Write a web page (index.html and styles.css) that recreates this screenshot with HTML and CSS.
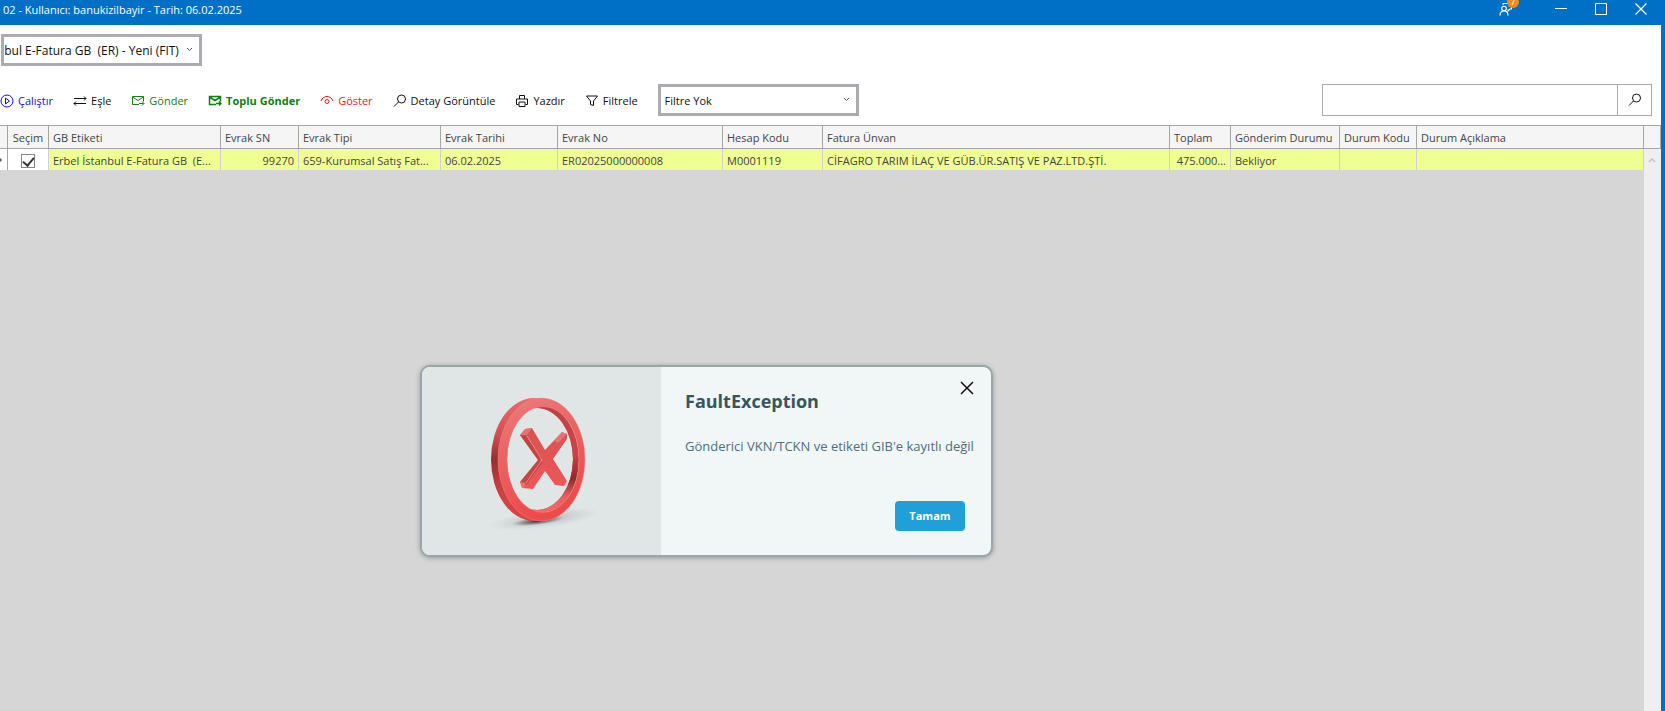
FILE: index.html
```html
<!DOCTYPE html>
<html lang="tr">
<head>
<meta charset="utf-8">
<title>E-Fatura Gönderim</title>
<link rel="stylesheet" href="styles.css">
</head>
<body>
<div class="window">
  <header class="titlebar">
    <span class="titlebar-text">02 - Kullanıcı: banukizilbayir - Tarih: 06.02.2025</span>
    <div class="titlebar-actions">
      <button class="caption-button feedback" aria-label="Geri bildirim">
        <svg width="14" height="14" viewBox="0 0 14 14" fill="none" stroke="#fff" stroke-width="1.1"><path d="M4 3V1.500h8.500V7H11L9 9V7.500"/><circle cx="5" cy="6.500" r="2.300"/><path d="M1 13.500c0-3 1.500-4.500 4-4.500s4 1.500 4 4.500"/></svg>
        <span class="badge">7</span>
      </button>
      <button class="caption-button" aria-label="Simge durumuna küçült"><svg width="14" height="14" viewBox="0 0 14 14" stroke="#fff" stroke-width="1"><path d="M1 6.500h12"/></svg></button>
      <button class="caption-button" aria-label="Ekranı kapla"><svg width="14" height="14" viewBox="0 0 14 14" fill="none" stroke="#fff" stroke-width="1"><path d="M1.500 1.500h11v11h-11z"/></svg></button>
      <button class="caption-button" aria-label="Pencereyi kapat"><svg width="14" height="14" viewBox="0 0 14 14" stroke="#fff" stroke-width="1.200"><path d="M1.500 1.500l11 11M12.500 1.500l-11 11"/></svg></button>
    </div>
  </header>

  <main class="content">
    <div class="label-row">
      <div class="combo combo-label">
        <select aria-label="GB Etiketi"><option>Erbel İstanbul E-Fatura GB &nbsp;(ER) - Yeni (FIT)</option></select>
        <svg class="combo-arrow" width="7" height="5" viewBox="0 0 7 5" fill="none" stroke="#555"><path d="M1 1l2.500 2.500L6 1"/></svg>
      </div>
    </div>

    <div class="toolbar">
      <button class="tool blue"><svg width="14" height="14" viewBox="0 0 14 14" fill="none" stroke="currentColor"><circle cx="7" cy="7" r="6"/><path d="M5.500 4v6l4-3z"/></svg>Çalıştır</button>
      <button class="tool"><svg width="14" height="14" viewBox="0 0 14 14" fill="none" stroke="currentColor"><path d="M1 4.500h12M11 2.500l2 2-2 2M13 9.500H1M3 7.500l-2 2 2 2"/></svg>Eşle</button>
      <button class="tool green"><svg width="14" height="14" viewBox="0 0 14 14" fill="none" stroke="currentColor"><path d="M8 10.500H1.500v-8h11v5M1.500 3L7 6.500 12.500 3M8 9.500h4.500M11 7.500l2 2-2 2"/></svg>Gönder</button>
      <button class="tool green strong"><svg width="14" height="14" viewBox="0 0 14 14" fill="none" stroke="currentColor" stroke-width="1.500"><path d="M8 10.500H1.500v-8h11v5M1.500 3L7 6.500 12.500 3M8 9.500h4.500M11 7.500l2 2-2 2"/></svg>Toplu Gönder</button>
      <button class="tool red"><svg width="14" height="14" viewBox="0 0 14 14" fill="none" stroke="currentColor"><path d="M1 7c1-3 3.500-4.500 6-4.500S12 4 13 7"/><circle cx="7" cy="7.500" r="2"/></svg>Göster</button>
      <button class="tool"><svg width="14" height="14" viewBox="0 0 14 14" fill="none" stroke="currentColor"><circle cx="8.500" cy="5" r="4"/><path d="M5.500 8L1 12.500"/></svg>Detay Görüntüle</button>
      <button class="tool"><svg width="14" height="14" viewBox="0 0 14 14" fill="none" stroke="currentColor"><path d="M4.500 5V1.500h5V5M3.500 10.500h-2V5h11v5.500h-2M4 8h6v4.500H4z"/></svg>Yazdır</button>
      <button class="tool"><svg width="14" height="14" viewBox="0 0 14 14" fill="none" stroke="currentColor"><path d="M1.500 2h11L8.500 7v4.500l-3-1V7z"/></svg>Filtrele</button>
      <div class="combo combo-filter">
        <select aria-label="Filtre"><option>Filtre Yok</option></select>
        <svg class="combo-arrow" width="7" height="5" viewBox="0 0 7 5" fill="none" stroke="#555"><path d="M1 1l2.500 2.500L6 1"/></svg>
      </div>
      <form class="search">
        <input type="text" aria-label="Ara">
        <button type="button" aria-label="Ara"><svg width="14" height="14" viewBox="0 0 14 14" fill="none" stroke="currentColor"><circle cx="8.500" cy="5" r="4"/><path d="M5.500 8L1 12.500"/></svg></button>
      </form>
    </div>

    <section class="grid">
      <table>
        <colgroup><col class="c-mark"><col class="c-pick"><col class="c-label"><col class="c-sn"><col class="c-type"><col class="c-date"><col class="c-no"><col class="c-account"><col class="c-title"><col class="c-total"><col class="c-state"><col class="c-code"><col class="c-note"><col class="c-scroll"></colgroup>
        <thead>
          <tr><th></th><th class="pick">Seçim</th><th>GB Etiketi</th><th>Evrak SN</th><th>Evrak Tipi</th><th>Evrak Tarihi</th><th>Evrak No</th><th>Hesap Kodu</th><th>Fatura Ünvan</th><th>Toplam</th><th>Gönderim Durumu</th><th>Durum Kodu</th><th>Durum Açıklama</th><th></th></tr>
        </thead>
        <tbody>
          <tr><td class="mark"><svg width="2" height="4" viewBox="0 0 2 4"><path d="M0 0l2 2-2 2z" fill="#555"/></svg></td><td class="pick"><input type="checkbox" checked aria-label="Seçim"></td><td>Erbel İstanbul E-Fatura GB &nbsp;(E...</td><td class="num">99270</td><td>659-Kurumsal Satış Fat...</td><td>06.02.2025</td><td>ER02025000000008</td><td>M0001119</td><td>CİFAGRO TARIM İLAÇ VE GÜB.ÜR.SATIŞ VE PAZ.LTD.ŞTİ.</td><td class="num">475.000...</td><td>Bekliyor</td><td></td><td></td><td class="scroll-up"><svg width="8" height="5" viewBox="0 0 8 5" fill="none" stroke="#c4c4c4" stroke-width="1.500"><path d="M1 4l3-3 3 3"/></svg></td></tr>
        </tbody>
      </table>
      <div class="grid-body"><div class="scroll-track"></div></div>
    </section>
  </main>

  <div class="dialog" role="alertdialog" aria-labelledby="dialog-title" aria-describedby="dialog-text">
    <div class="dialog-art">
      <svg width="124" height="150" viewBox="0 0 124 150">
        <defs>
          <linearGradient id="face" x1="0" y1="0" x2="0.300" y2="1"><stop offset="0" stop-color="#ee7c7c"/><stop offset="0.450" stop-color="#e96464"/><stop offset="1" stop-color="#ee4a4a"/></linearGradient>
          <linearGradient id="rim" x1="0" y1="0" x2="0" y2="1"><stop offset="0" stop-color="#ec6b6b"/><stop offset="0.300" stop-color="#d05050"/><stop offset="0.500" stop-color="#9a2e30"/><stop offset="0.750" stop-color="#cc4042"/><stop offset="1" stop-color="#d84545"/></linearGradient>
          <linearGradient id="inner" x1="0" y1="0" x2="0" y2="1"><stop offset="0" stop-color="#b94444"/><stop offset="0.450" stop-color="#cf4244"/><stop offset="0.680" stop-color="#8d2a2c"/><stop offset="0.850" stop-color="#e56060"/><stop offset="1" stop-color="#f06a6a"/></linearGradient>
          <linearGradient id="cross" x1="0" y1="0" x2="0" y2="1"><stop offset="0" stop-color="#d85252"/><stop offset="1" stop-color="#ee5757"/></linearGradient>
          <radialGradient id="shade"><stop offset="0" stop-color="#888" stop-opacity="0.600"/><stop offset="0.500" stop-color="#999" stop-opacity="0.250"/><stop offset="1" stop-color="#aaa" stop-opacity="0"/></radialGradient>
          <radialGradient id="contact"><stop offset="0" stop-color="#222" stop-opacity="0.900"/><stop offset="1" stop-color="#444" stop-opacity="0"/></radialGradient>
        </defs>
        <ellipse cx="64" cy="131" rx="56" ry="9" fill="url(#shade)" transform="rotate(-7 64 131)"/>
        <ellipse cx="58" cy="133" rx="26" ry="4" fill="url(#contact)" transform="rotate(-7 58 133)"/>
        <path fill="url(#rim)" fill-rule="evenodd" d="M11 71.500a43 61.500 0 1 0 86 0a43 61.500 0 1 0-86 0zM21 71a36 51 0 1 0 72 0a36 51 0 1 0-72 0z"/>
        <path fill="url(#inner)" fill-rule="evenodd" d="M27 71.500a36 53 0 1 0 72 0a36 53 0 1 0-72 0zM21 71a36 51 0 1 0 72 0a36 51 0 1 0-72 0z"/>
        <path fill="url(#face)" stroke="#f08a8a" stroke-width="0.500" fill-rule="evenodd" d="M18 71.500a43.500 61.500 0 1 0 87 0a43.500 61.500 0 1 0-87 0zM27 71.500a36 53 0 1 0 72 0a36 53 0 1 0-72 0z"/>
        <path fill="url(#cross)" d="M40 47l5-6 7-1 13 22 17-18 5 2v5L73 71l14 22-3 5-9-1-10-14-12 18-11-1-2-6 18-22z"/>
        <path fill="#a93839" d="M40 47l6 1 16 23-4 1zM58 72l5 2-17 23-6-3z" opacity="0.550"/>
        <path fill="#f08282" d="M40 47l5-6 7-1-5 7zM40 94l6 1-2 5-2 0zM74 53l8-9 5 2-9 9z" opacity="0.650"/>
        <path fill="none" stroke="#f49393" stroke-width="0.800" d="M47 48l15 24-16 23"/>
      </svg>
    </div>
    <div class="dialog-main">
      <button class="dialog-close" aria-label="Kapat"><svg width="14" height="14" viewBox="0 0 14 14" stroke="#111" stroke-width="1.500"><path d="M1 1l12 12M13 1L1 13"/></svg></button>
      <h1 id="dialog-title">FaultException</h1>
      <p id="dialog-text">Gönderici VKN/TCKN ve etiketi GIB'e kayıtlı değil</p>
      <button class="dialog-ok">Tamam</button>
    </div>
  </div>
</div>
</body>
</html>
```
FILE: styles.css
```css
* { box-sizing: border-box; }
body {
  margin: 0;
  font: 11px/16px "Open Sans", "Noto Sans", sans-serif;
  color: #111;
}
button, select, input { font: inherit; color: inherit; }
button { border: 0; padding: 0; background: none; }
svg { display: block; flex: none; }

.window { position: relative; display: flex; flex-direction: column; min-height: 100vh; background: #0070c6; overflow: hidden; }

.titlebar { display: flex; align-items: flex-start; justify-content: space-between; height: 25px; padding: 2px 17px 0 3px; color: #fff; }
.titlebar-actions { display: flex; gap: 26px; }
.caption-button { position: relative; display: flex; }
.caption-button.feedback { margin-right: 15px; }
.badge { position: absolute; left: 8px; top: -6px; width: 12px; height: 12px; border-radius: 6px; background: #f48a1c; font-size: 9px; line-height: 12px; text-align: center; }

.content { flex: 1; display: flex; flex-direction: column; margin-right: 4px; background: #fff; }
.label-row { padding: 9px 1px 0; }

.combo { position: relative; width: 201px; height: 32px; border: 3px solid #ababb0; background: #fff; }
.combo select { width: 100%; height: 100%; padding: 2px 3px 0 0; border: 0; background: none; appearance: none; font-size: 12px; }
.combo-filter select { padding-left: 4px; font-size: 11px; }
.combo-arrow { position: absolute; right: 6px; top: 10px; }
.combo-label { display: flex; justify-content: flex-end; overflow: hidden; }
.combo-label select { flex: none; width: auto; padding-right: 20px; }

.toolbar { display: flex; align-items: center; gap: 20px; padding: 18px 9px 9px 0; }
.tool { display: flex; align-items: center; gap: 4px; padding-top: 2px; white-space: nowrap; }
.blue { color: #1212d0; }
.green { color: #118011; }
.red { color: #dc1c1c; }
.strong { font-weight: 700; }
.search { display: flex; width: 330px; height: 32px; margin-left: auto; border: 1px solid #aba9ad; }
.search input { flex: 1; min-width: 0; border: 0; padding: 0 6px; }
.search button { width: 34px; display: grid; place-items: center; border-left: 1px solid #aba9ad; }

.grid { flex: 1; display: flex; flex-direction: column; color: #444; }
table { width: 100%; table-layout: fixed; border-collapse: separate; border-spacing: 0; border-top: 1px solid #a6a6a6; }
th, td { padding: 2px 4px 0; overflow: hidden; text-overflow: ellipsis; white-space: nowrap; text-align: left; font-weight: 400; }
th { height: 23px; background: #f5f5f5; border-right: 1px solid #a6a6a6; border-bottom: 1px solid #a6a6a6; }
td { height: 21px; background: #efff91; border-right: 1px solid #d0d0d0; }
th.pick, td.pick { padding-left: 2px; padding-right: 2px; text-align: center; }
td.pick, td.mark { background: #fff; }
td.mark { padding: 0; border-right-color: #a6a6a6; }
td.num { text-align: right; }
td.scroll-up { background: #efefef; border: 0; }
.c-mark { width: 8px; } .c-pick { width: 41px; } .c-label { width: 172px; } .c-sn { width: 78px; }
.c-type { width: 142px; } .c-date { width: 117px; } .c-no { width: 165px; } .c-account { width: 100px; }
.c-title { width: 347px; } .c-total { width: 61px; } .c-state { width: 109px; } .c-code { width: 77px; } .c-scroll { width: 17px; }
input[type="checkbox"] { appearance: none; display: block; width: 14px; height: 14px; margin: 0 auto; border: 1px solid #888; background: #fff; }
input[type="checkbox"]:checked::after { content: ""; display: block; width: 5px; height: 9px; margin: 0 auto; border: solid #333; border-width: 0 2px 2px 0; transform: rotate(40deg); }
.grid-body { flex: 1; display: flex; justify-content: flex-end; background: #d6d6d6; }
.scroll-track { width: 17px; background: #efefef; }

.dialog { position: absolute; left: 420px; top: 365px; display: flex; width: 573px; border: 2px solid #98a7ac; border-radius: 10px; background: #f1f6f7; box-shadow: 0 1px 5px rgba(0, 0, 0, 0.3); overflow: hidden; }
.dialog-art { width: 239px; display: flex; padding: 21px 57px 17px 58px; background: #e0e5e6; }
.dialog-main { position: relative; flex: 1; display: flex; flex-direction: column; padding: 22px 0 24px 24px; }
.dialog-close { position: absolute; right: 17px; top: 14px; }
.dialog-main h1 { margin: 0; font-size: 18px; line-height: 24px; font-weight: 700; color: #35555f; }
.dialog-main p { margin: 23px 0 0; font-size: 13px; line-height: 20px; white-space: nowrap; color: #4c6f7c; }
.dialog-ok { align-self: flex-end; width: 70px; height: 30px; margin: auto 26px 0 0; border-radius: 4px; background: #219fd9; color: #fff; font-weight: 700; }
```
